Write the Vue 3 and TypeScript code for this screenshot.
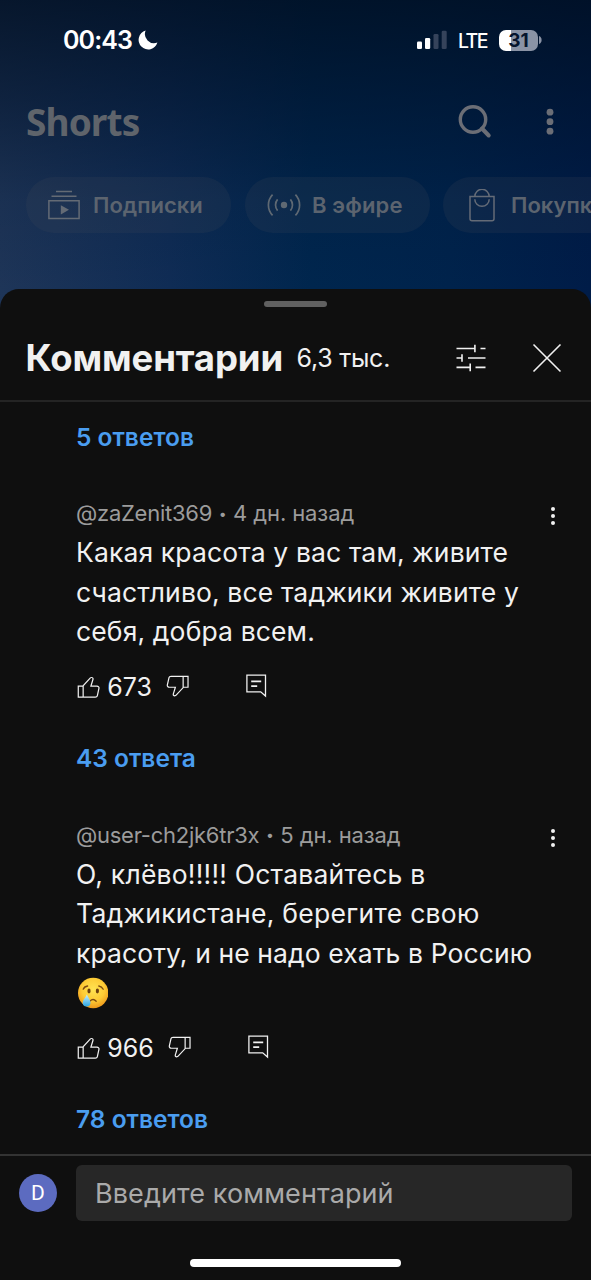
<script setup lang="ts">
interface Comment {
  author: string
  age: string
  lines: string[]
  crying?: boolean
  likes: string
  replies: string
  key: string
}

const comments: Comment[] = [
  {
    key: 'a',
    author: '@zaZenit369',
    age: '4 дн. назад',
    lines: ['Какая красота у вас там, живите', 'счастливо, все таджики живите у', 'себя, добра всем.'],
    likes: '673',
    replies: '43 ответа',
  },
  {
    key: 'b',
    author: '@user-ch2jk6tr3x',
    age: '5 дн. назад',
    lines: ['О, клёво!!!!! Оставайтесь в', 'Таджикистане, берегите свою', 'красоту, и не надо ехать в Россию'],
    crying: true,
    likes: '966',
    replies: '78 ответов',
  },
]

const thumb =
  'M18.77,11h-4.23l1.52-4.94C16.38,5.03,15.54,4,14.38,4c-0.58,0-1.14,0.24-1.52,0.65L7,11H3v10h4h1h9.43c1.06,0,1.98-0.67,2.19-1.61l1.34-6C21.23,12.15,20.18,11,18.77,11z M7,20H4v-8h3V20z M19.98,13.17l-1.34,6C18.54,19.65,18.03,20,17.43,20H8v-8.61l5.6-6.06C13.79,5.12,14.08,5,14.38,5c0.26,0,0.5,0.11,0.63,0.3c0.07,0.1,0.15,0.26,0.09,0.47l-1.52,4.94L13.18,12h1.35h4.23c0.41,0,0.8,0.17,1.03,0.46C19.92,12.61,20.05,12.86,19.98,13.17z'
</script>

<template>
  <div class="screen">
    <div class="status">
      <span class="clock">00:43</span>
      <svg class="moon" width="20" height="20" viewBox="0 0 20 20"><path d="M7.6.6A9.6 9.6 0 1 0 19.4 12.6 9.2 9.2 0 0 1 7.6.6Z" fill="#fff" /></svg>
      <svg class="signal" width="31" height="20" viewBox="0 0 31 20">
        <rect x="0" y="11.5" width="5" height="7.5" rx="1.3" fill="#fff" />
        <rect x="8" y="8" width="5.2" height="11" rx="1.3" fill="#fff" />
        <rect x="16.5" y="4" width="5" height="15" rx="1.3" fill="#35435b" />
        <rect x="24.7" y="0.8" width="5" height="18.2" rx="1.3" fill="#35435b" />
      </svg>
      <span class="lte">LTE</span>
      <span class="battery"><span class="level">31</span></span>
      <svg class="nub" width="3" height="8" viewBox="0 0 3 8"><path d="M0 0C1.6.5 2.6 2 2.6 4S1.6 7.5 0 8Z" fill="#8a93a5" /></svg>
    </div>

    <div class="topbar">
      <span class="shorts">Shorts</span>
      <svg class="search" width="36" height="36" viewBox="0 0 36 36" fill="none" stroke="#6b6e76">
        <circle cx="15" cy="15.5" r="12.7" stroke-width="3.4" />
        <path d="M24 24.5l6.7 7" stroke-width="4" stroke-linecap="round" />
      </svg>
      <svg class="more" width="8" height="28" viewBox="0 0 8 28" fill="#6b6e76">
        <circle cx="4" cy="4.2" r="3.4" /><circle cx="4" cy="13.7" r="3.4" /><circle cx="4" cy="23.2" r="3.4" />
      </svg>
    </div>

    <div class="chips">
      <div class="chip subs">
        <svg width="32" height="30" viewBox="0 0 32 30" fill="none" stroke="#646b75" stroke-width="1.5">
          <path d="M8 1.5h16M3.5 6.2h25M.9 10.8h30.2v17.8H.9z" /><path d="M12.8 15.2v9.2l8.2-4.6z" fill="#646b75" stroke="none" />
        </svg>
        <span>Подписки</span>
      </div>
      <div class="chip live">
        <svg width="34" height="24" viewBox="0 0 34 24" fill="none" stroke="#5f6973" stroke-width="1.7">
          <circle cx="17" cy="12" r="3.2" fill="#5f6973" stroke="none" />
          <path d="M10.6 6.4a8.6 8.6 0 0 0 0 11.2M23.4 6.4a8.6 8.6 0 0 1 0 11.2M5.6 1.6a15 15 0 0 0 0 20.8M28.4 1.6a15 15 0 0 1 0 20.8" />
        </svg>
        <span>В эфире</span>
      </div>
      <div class="chip shop">
        <svg width="26" height="33" viewBox="0 0 26 33" fill="none" stroke="#646b77" stroke-width="1.5">
          <path d="M1 7.5h24v22.3a2 2 0 0 1-2 2H3a2 2 0 0 1-2-2zM5.8 7.5a7.2 7.2 0 0 1 14.4 0M5.8 10.3a7.2 7 0 0 0 14.4 0" />
        </svg>
        <span>Покупк</span>
      </div>
    </div>

    <div class="sheet">
      <div class="handle"></div>
      <div class="head">
        <span class="title">Комментарии</span>
        <span class="count">6,3 тыс.</span>
        <svg class="tune" width="30" height="28" viewBox="0 0 30 28" fill="none" stroke="#f1f1f1" stroke-width="1.6">
          <path d="M.5 4.5h18.7M24.5 4.5h5M18.9.8v7.4M.5 14h5.8M12 14h17.5M6 10.2v7.6M.5 23.4h14M19.5 23.4h10M14.2 19.6v7.6" />
        </svg>
        <svg class="close" width="30" height="30" viewBox="0 0 30 30" fill="none" stroke="#f1f1f1" stroke-width="1.6">
          <path d="M1.5 1.5l27 27M28.5 1.5l-27 27" />
        </svg>
      </div>

      <div class="list">
        <div class="replies"><span>5 ответов</span></div>
        <article v-for="c in comments" :key="c.key" class="comment" :class="c.key">
          <div class="meta">
            <span class="author">{{ c.author }}</span><span class="dot">•</span><span class="age">{{ c.age }}</span>
            <svg class="kebab" width="6" height="20" viewBox="0 0 6 20" fill="#f1f1f1">
              <circle cx="3" cy="3" r="2" /><circle cx="3" cy="10" r="2" /><circle cx="3" cy="17" r="2" />
            </svg>
          </div>
          <p v-for="(line, i) in c.lines" :key="i" class="line" :class="'l' + i">{{ line }}</p>
          <p v-if="c.crying" class="line face">
            <svg width="32" height="32" viewBox="0 0 32 32">
              <defs>
                <radialGradient id="skin" cx="50%" cy="38%" r="62%">
                  <stop offset="0" stop-color="#ffe352" /><stop offset=".6" stop-color="#fdcb35" /><stop offset="1" stop-color="#ee981b" />
                </radialGradient>
                <linearGradient id="tear" x1="0" y1="0" x2="0" y2="1">
                  <stop offset="0" stop-color="#c9efff" /><stop offset="1" stop-color="#2ba5e0" />
                </linearGradient>
              </defs>
              <circle cx="17.2" cy="16" r="15.2" fill="url(#skin)" />
              <ellipse cx="13" cy="14" rx="1.6" ry="2.4" fill="#6b3f0e" />
              <ellipse cx="21.4" cy="14" rx="1.6" ry="2.4" fill="#6b3f0e" />
              <path d="M7.2 12.2q1.2-2.8 4.4-3.2M22.8 9q3.1.5 4.4 3.2M14 24q3.2-3 6.2.2" fill="none" stroke="#7c4a10" stroke-width="1.3" stroke-linecap="round" />
              <path d="M10.8 17.6c1.5 3 3.7 5.6 3.7 8a3.9 3.9 0 0 1-7.8 0c0-2.5 3-5 4.1-8z" fill="url(#tear)" />
            </svg>
          </p>
          <div class="actions">
            <svg class="thumb" width="29.3" height="29.3" viewBox="0 0 24 24"><path :d="thumb" fill="#f1f1f1" /></svg>
            <span class="likes">{{ c.likes }}</span>
            <svg class="thumb down" width="29.3" height="29.3" viewBox="0 0 24 24"><path :d="thumb" fill="#f1f1f1" /></svg>
            <svg class="note" width="21" height="24" viewBox="0 0 21 24" fill="none" stroke="#f1f1f1" stroke-width="1.3">
              <path d="M.9 1.1h18.6v21l-4.8-4.3H.9z" /><path d="M5.2 7.3h10M5.2 12.1h6" stroke-width="1.8" />
            </svg>
          </div>
          <div class="replies"><span>{{ c.replies }}</span></div>
        </article>
      </div>

      <div class="composer">
        <span class="avatar">D</span>
        <div class="field"><span>Введите комментарий</span></div>
      </div>
      <div class="home"></div>
    </div>
  </div>
</template>

<style>
html,
body {
  margin: 0;
  background: #0f0f0f;
}
</style>

<style scoped>
.screen {
  width: 591px;
  height: 1280px;
  overflow: hidden;
  display: flex;
  flex-direction: column;
  font-family: Inter, Roboto, "Liberation Sans", sans-serif;
  white-space: nowrap;
  background:
    linear-gradient(180deg, rgba(0, 14, 32, 0.78) 0, rgba(0, 16, 38, 0.5) 100px, rgba(0, 16, 38, 0.12) 200px, rgba(0, 16, 38, 0) 290px) 0 0 / 591px 310px no-repeat,
    linear-gradient(90deg, #1e3558 0, #0f2c55 170px, #00264e 310px, #00234c 450px, #001c48 591px) 0 0 / 591px 310px no-repeat;
}
svg {
  display: block;
  flex: none;
}
span {
  flex: none;
}
.status {
  height: 80px;
  display: flex;
  align-items: center;
  padding-left: 63px;
  color: #fff;
  box-sizing: border-box;
  flex: none;
}
.clock {
  width: 74.5px;
  font-size: 25px;
  font-weight: 600;
  letter-spacing: -0.9px;
}
.signal {
  margin-left: 259.5px;
}
.lte {
  width: 29px;
  margin-left: 10px;
  font-size: 19.5px;
  font-weight: 500;
  letter-spacing: -1.6px;
  padding-top: 1px;
}
.battery {
  width: 39px;
  height: 21px;
  margin-left: 12px;
  border-radius: 7px;
  background: linear-gradient(90deg, #fff 12px, #8a93a5 12px);
  display: flex;
  align-items: center;
  justify-content: center;
}
.level {
  font-size: 19px;
  font-weight: 700;
  line-height: 21px;
  color: #06152e;
}
.nub {
  margin-left: 1px;
}
.topbar {
  height: 84px;
  display: flex;
  align-items: center;
  padding-left: 26px;
  flex: none;
}
.shorts {
  width: 432px;
  font-family: "Noto Sans", sans-serif;
  font-weight: 700;
  font-size: 37px;
  line-height: 50px;
  letter-spacing: -0.9px;
  color: #5f646b;
}
.more {
  margin-left: 52px;
}
.chips {
  margin-top: 13px;
  height: 56px;
  display: flex;
  padding-left: 26px;
  flex: none;
}
.chip {
  height: 56px;
  border-radius: 28px;
  display: flex;
  align-items: center;
  flex: none;
  box-sizing: border-box;
  background: rgba(70, 80, 90, 0.17);
  font-size: 22px;
  font-weight: 600;
  color: #5c646f;
}
.subs {
  width: 205px;
  padding-left: 22px;
  gap: 13px;
}
.live {
  width: 185px;
  margin-left: 14px;
  padding-left: 22px;
  gap: 11px;
  letter-spacing: 0.15px;
}
.shop {
  width: 190px;
  margin-left: 13px;
  padding-left: 26px;
  gap: 16px;
}
.sheet {
  margin-top: 56px;
  height: 991px;
  flex: none;
  background: #0f0f0f;
  border-radius: 19px 19px 0 0;
  display: flex;
  flex-direction: column;
  color: #f1f1f1;
}
.handle {
  width: 63px;
  height: 6px;
  margin: 12px auto 0;
  border-radius: 3px;
  background: #606060;
  flex: none;
}
.head {
  height: 95px;
  box-sizing: border-box;
  border-bottom: 2px solid #242424;
  display: flex;
  align-items: center;
  padding: 8px 0 0 25.5px;
  flex: none;
}
.title {
  width: 271px;
  font-size: 36.5px;
  font-weight: 700;
  letter-spacing: -0.1px;
  padding-top: 1px;
}
.count {
  width: 159px;
  font-size: 25px;
  letter-spacing: -0.25px;
  padding-top: 1px;
}
.close {
  margin-left: 46px;
}
.list {
  height: 752px;
  padding-left: 76px;
  overflow: hidden;
  flex: none;
}
.replies {
  height: 71px;
  display: flex;
  align-items: center;
  font-size: 24.5px;
  font-weight: 600;
  color: #4a9df0;
  margin-top: -1px;
}
.comment {
  margin-top: 21px;
}
.comment .replies {
  margin-top: 0;
}
.meta {
  height: 40px;
  display: flex;
  align-items: center;
  font-size: 22px;
  color: #9c9c9c;
  position: relative;
}
.author {
  letter-spacing: -0.25px;
}
.age {
  letter-spacing: -0.1px;
}
.dot {
  width: 21px;
  text-align: center;
  font-size: 14px;
}
.kebab {
  position: absolute;
  left: 474px;
  top: 13px;
}
.line {
  margin: 0;
  height: 39.5px;
  line-height: 39.5px;
  font-size: 26.5px;
  letter-spacing: 0.13px;
}
.b .l0 {
  letter-spacing: 0.22px;
}
.b .l1 {
  letter-spacing: 0.28px;
}
.b .l2 {
  letter-spacing: 0.09px;
}
.face {
  display: flex;
  align-items: center;
}
.actions {
  height: 71px;
  display: flex;
  align-items: center;
}
.thumb {
  margin-left: -2.5px;
}
.likes {
  margin-left: 4.5px;
  font-size: 25px;
}
.down {
  transform: rotate(180deg);
  margin-left: 11.5px;
}
.note {
  margin-left: 53.5px;
  margin-top: -2px;
}
.composer {
  height: 66px;
  border-top: 2px solid #333;
  display: flex;
  align-items: center;
  padding: 10px 19px 0;
  box-sizing: border-box;
  flex: none;
}
.avatar {
  width: 38px;
  height: 38px;
  border-radius: 50%;
  background: #5c6bc0;
  color: #fff;
  font-family: Roboto, sans-serif;
  font-size: 21px;
  line-height: 39px;
  text-align: center;
}
.field {
  width: 496px;
  height: 56px;
  margin-left: 19px;
  padding-left: 19px;
  box-sizing: border-box;
  border-radius: 6px;
  background: #272727;
  color: #aaa;
  font-size: 27px;
  letter-spacing: 0.1px;
  line-height: 58px;
  flex: none;
}
.home {
  width: 211px;
  height: 8px;
  margin: 39px 0 0 190px;
  border-radius: 4px;
  background: #fff;
  flex: none;
}
</style>
